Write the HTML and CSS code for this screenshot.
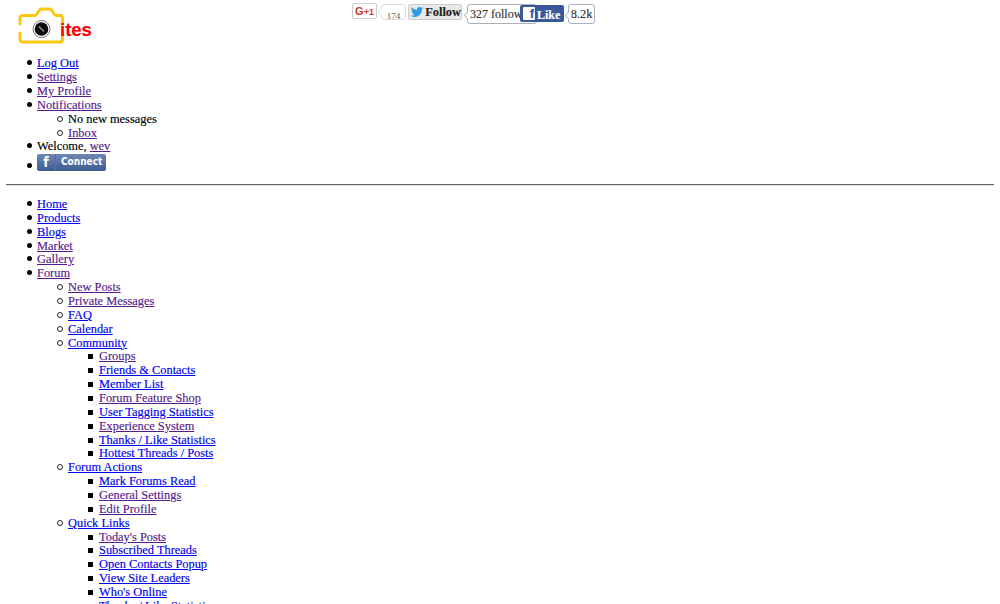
FILE: index.html
```html
<!DOCTYPE html>
<html lang="en">
<head>
<meta charset="utf-8">
<title>Forum</title>
<link rel="stylesheet" href="styles.css">
</head>
<body>
<header class="top">
  <a class="logo" href="#logo">
    <svg class="logo-cam" width="48" height="40" viewBox="0 0 48 40">
      <path d="M3 18V12Q3 9.500 6 9.500H17Q19 9.500 20 8L22 4.500Q23 3 25 3H32Q34 3 35 4.500L37 8Q38 9.500 40 9.500H43Q45.500 9.500 45.500 12V18" fill="none" stroke="#fdc70c" stroke-width="3" stroke-linecap="round"/>
      <path d="M3 27V33Q3 36 6 36H43Q45.500 36 45.500 33V27" fill="none" stroke="#fdc70c" stroke-width="3" stroke-linecap="round"/>
      <circle cx="24.500" cy="23" r="8.500" fill="#fff" stroke="#777" stroke-width="1"/>
      <circle cx="24.500" cy="23" r="6.800" fill="#0c0c0c"/>
      <path d="M22 20.500L27 25.500" stroke="#999" stroke-width="1.300"/>
    </svg>
    <span class="logo-text">ites</span>
  </a>
  <div class="social">
    <span class="btn-gplus"><span class="g">G</span>+1</span>
    <span class="bubble bubble-gplus">174</span>
    <span class="btn-tw">
      <svg width="14" height="12" viewBox="0 0 24 20"><path d="M24 2.400a10 10 0 0 1-2.800.8A5 5 0 0 0 23.300.5a10 10 0 0 1-3.100 1.200A4.900 4.900 0 0 0 11.800 6.200 14 14 0 0 1 1.700.9a4.900 4.900 0 0 0 1.500 6.600 5 5 0 0 1-2.200-.6c0 2.400 1.700 4.400 3.900 4.900a5 5 0 0 1-2.200.1 4.900 4.900 0 0 0 4.600 3.400A9.900 9.900 0 0 1 0 17.300 14 14 0 0 0 21.500 5c1-.7 1.800-1.600 2.500-2.600z" fill="#2a9fe0"/></svg>
      Follow
    </span>
    <span class="bubble bubble-tw">327 follow</span>
    <span class="btn-fb"><span class="fb-f">f</span><span class="fb-t">Like</span></span>
    <span class="bubble bubble-fb">8.2k</span>
  </div>
</header>
<ul class="list">
  <li><a href="#a">Log Out</a></li>
  <li><a class="seen" href="#b">Settings</a></li>
  <li><a class="seen" href="#c">My Profile</a></li>
  <li><a class="seen" href="#d">Notifications</a>
    <ul class="list">
      <li>No new messages</li>
      <li><a class="seen" href="#e">Inbox</a></li>
    </ul>
  </li>
  <li>Welcome, <a class="seen" href="#f">wev</a></li>
  <li class="connect-row"><span class="connect"><span class="connect-f">f</span><span class="connect-t">Connect</span></span></li>
</ul>
<hr class="rule">
<ul class="list">
  <li><a href="#g">Home</a></li>
  <li><a href="#h">Products</a></li>
  <li><a href="#i">Blogs</a></li>
  <li><a class="seen" href="#j">Market</a></li>
  <li><a class="seen" href="#k">Gallery</a></li>
  <li><a class="seen" href="#l">Forum</a>
    <ul class="list">
      <li><a class="seen" href="#m">New Posts</a></li>
      <li><a class="seen" href="#n">Private Messages</a></li>
      <li><a href="#o">FAQ</a></li>
      <li><a href="#p">Calendar</a></li>
      <li><a href="#q">Community</a>
        <ul class="list">
          <li><a class="seen" href="#r">Groups</a></li>
          <li><a href="#s">Friends &amp; Contacts</a></li>
          <li><a href="#t">Member List</a></li>
          <li><a class="seen" href="#u">Forum Feature Shop</a></li>
          <li><a href="#v">User Tagging Statistics</a></li>
          <li><a class="seen" href="#w">Experience System</a></li>
          <li><a href="#x">Thanks / Like Statistics</a></li>
          <li><a href="#y">Hottest Threads / Posts</a></li>
        </ul>
      </li>
      <li><a href="#z">Forum Actions</a>
        <ul class="list">
          <li><a href="#aa">Mark Forums Read</a></li>
          <li><a class="seen" href="#ab">General Settings</a></li>
          <li><a class="seen" href="#ac">Edit Profile</a></li>
        </ul>
      </li>
      <li><a href="#ad">Quick Links</a>
        <ul class="list">
          <li><a class="seen" href="#ae">Today's Posts</a></li>
          <li><a href="#af">Subscribed Threads</a></li>
          <li><a href="#ag">Open Contacts Popup</a></li>
          <li><a href="#ah">View Site Leaders</a></li>
          <li><a href="#ai">Who's Online</a></li>
          <li><a href="#aj">Thanks / Like Statistics</a></li>
        </ul>
      </li>
    </ul>
  </li>
</ul>
</body>
</html>
```
FILE: styles.css
```css
html, body { height: 100%; overflow: hidden; }
body {
  margin: 0;
  padding: 0 6px;
  background: #fff;
  color: #000;
  font-family: "Liberation Serif", serif;
  font-size: 12.4px;
  line-height: 13.86px;
  -webkit-text-stroke: .15px;
}
a { color: #0000ee; }
a.seen { color: #551a8b; }

.top { display: flex; align-items: flex-start; height: 57.3px; }
.logo { display: flex; align-items: flex-start; margin: 6px 0 0 11px; text-decoration: none; width: 335px; }
.logo-cam { display: block; }
.logo-text {
  font: bold 18.5px/1 "Liberation Sans", sans-serif;
  color: #f00;
  margin: 15px 0 0 -5px;
}

.social { display: flex; align-items: flex-start; color: #333; }
.btn-gplus {
  width: 25px; height: 16px; margin-top: 3px;
  box-sizing: border-box;
  border: 1px solid #ccc; border-radius: 2px;
  background: #fff; color: #d8392b;
  font: bold 9px/14px "Liberation Sans", sans-serif;
  text-align: center;
  -webkit-text-stroke: 0;
}
.g { font-size: 11px; }
.bubble {
  box-sizing: border-box;
  border: 1px solid #a9b1bd; border-radius: 3px;
  background: #fff; position: relative;
  text-align: center;
}
.bubble::before {
  content: ""; position: absolute; left: -4px; top: 7px;
  width: 6px; height: 6px;
  border-left: 1px solid #a9b1bd; border-bottom: 1px solid #a9b1bd;
  background: #fff;
  transform: rotate(45deg) scale(.75);
}
.bubble-gplus {
  width: 25px; height: 16px; margin: 4px 0 0 4px;
  border-color: #ddd; color: #777;
  font-size: 9px;
  line-height: 22px;
}
.bubble-gplus::before { top: 3px; border-color: #ddd; }
.btn-tw {
  display: flex; align-items: center; gap: 2px;
  width: 54px; height: 16px; margin: 4px 0 0 2px;
  box-sizing: border-box; padding-left: 2px;
  background: #e8e8e8; border: 1px solid #ccc; border-radius: 2px;
  color: #222; font-weight: bold; font-size: 12.4px; line-height: 14px;
}
.bubble-tw { width: 70px; height: 20px; margin: 4px 0 0 5px; line-height: 18px; text-align: left; padding-left: 2px; white-space: nowrap; font-size: 12px; }
.btn-fb {
  display: flex; align-items: flex-end; position: relative;
  width: 44px; height: 17px; margin: 5px 0 0 -17px;
  box-sizing: border-box; padding: 0 0 0 3px;
  background: #3b5998; border-radius: 2px;
  color: #fff; font-weight: bold; font-size: 12px; line-height: 14px;
}
.fb-f {
  width: 12px; height: 13px; margin: 0 2px 2px 0;
  background: #fff; color: #3b5998; border-radius: 1px;
  font: bold 13px/13px "Liberation Sans", sans-serif; text-align: right; padding-right: 1px; box-sizing: border-box;
}
.fb-t { white-space: nowrap; }
.bubble-fb { width: 27px; height: 20px; margin: 4px 0 0 4px; line-height: 18px; }

.list { margin: 0; padding: 0 0 0 31px; list-style: none; }
.list li { position: relative; }
.list li::before {
  content: ""; position: absolute; left: -10px; top: 3px;
  width: 5px; height: 5px; border-radius: 50%;
  background: #000;
}
.list .list li::before {
  box-sizing: border-box; background: #fff; border: 1px solid #222;
  left: -11px; width: 6px; height: 6px;
}
.list .list .list li::before {
  background: #000; border: 0; border-radius: 0;
  width: 5px; height: 5px; left: -11px; top: 4px;
}
.rule { margin: 10.700px 0 12px; border: 0; border-top: 1px solid #666; border-bottom: 1px solid #ddd; }
.connect-row { height: 19px; }
.list li.connect-row::before { top: 9px; }
.connect {
  display: inline-flex; width: 69px; height: 17px;
  border-radius: 2px;
  background: linear-gradient(#6f88b6, #3d5a8f);
  color: #fff;
  font: bold 10px/16px "DejaVu Sans", sans-serif;
  font-stretch: condensed;
  -webkit-text-stroke: 0;
}
.connect-f { width: 18px; text-align: center; font-size: 14px; border-right: 1px solid #54709f; }
.connect-t { padding-left: 5px; }
```
